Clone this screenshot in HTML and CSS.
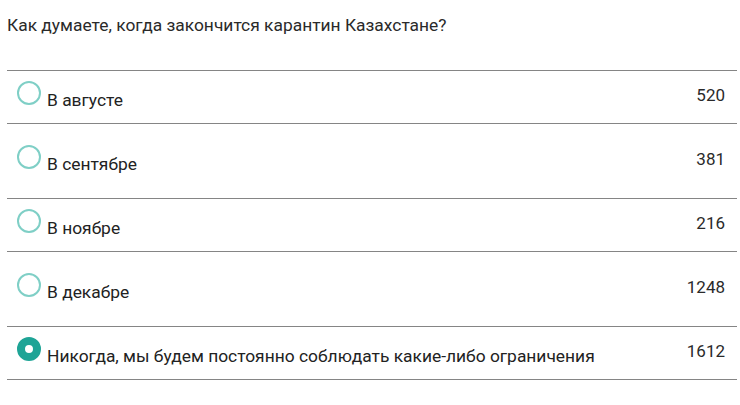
FILE: index.html
```html
<!DOCTYPE html>
<html lang="ru">
<head>
  <meta charset="UTF-8">
  <meta name="viewport" content="width=device-width, initial-scale=1.0">
  <title>Опрос</title>
  <link rel="stylesheet" href="styles.css">
</head>
<body>
  <section class="poll">
    <h2 class="poll-question">Как думаете, когда закончится карантин Казахстане?</h2>
    <ul class="poll-options">
      <li class="poll-option">
        <span class="radio"></span>
        <span class="option-label">В августе</span>
        <span class="option-count">520</span>
      </li>
      <li class="poll-option">
        <span class="radio"></span>
        <span class="option-label">В сентябре</span>
        <span class="option-count">381</span>
      </li>
      <li class="poll-option">
        <span class="radio"></span>
        <span class="option-label">В ноябре</span>
        <span class="option-count">216</span>
      </li>
      <li class="poll-option">
        <span class="radio"></span>
        <span class="option-label">В декабре</span>
        <span class="option-count">1248</span>
      </li>
      <li class="poll-option">
        <span class="radio checked"></span>
        <span class="option-label">Никогда, мы будем постоянно соблюдать какие-либо ограничения</span>
        <span class="option-count">1612</span>
      </li>
    </ul>
  </section>
</body>
</html>
```

FILE: styles.css
```css
body {
  margin: 0;
  padding: 0;
  background-color: #ffffff;
  color: #222222;
  font-family: Roboto, 'Liberation Sans', sans-serif;
  font-size: 17px;
  line-height: 24px;
}
.poll {
  padding: 13px 3px 0 7px;
}
.poll-question {
  margin: 0 0 33px;
  font-size: 17.4px;
  font-weight: 400;
  line-height: 24px;
  color: #2a2a2a;
}
.poll-options {
  list-style: none;
  margin: 0;
  padding: 0;
  border-top: 1px solid #858585;
}
.poll-option {
  display: flex;
  align-items: center;
  height: 52px;
  padding: 0 12px 0 10px;
  border-bottom: 1px solid #858585;
}
.poll-option:nth-child(even) {
  height: 74px;
}
.radio {
  flex: none;
  box-sizing: border-box;
  width: 24px;
  height: 24px;
  margin: -9px 6px 0 0;
  border: 2px solid #7fcfc6;
  border-radius: 50%;
}
.radio.checked {
  border: 8px solid #1ea496;
}
.option-label {
  flex: 1;
  margin-top: 5px;
  font-size: 17.4px;
}
.option-count {
  margin-bottom: 5px;
  color: #2a2a2a;
}
```
